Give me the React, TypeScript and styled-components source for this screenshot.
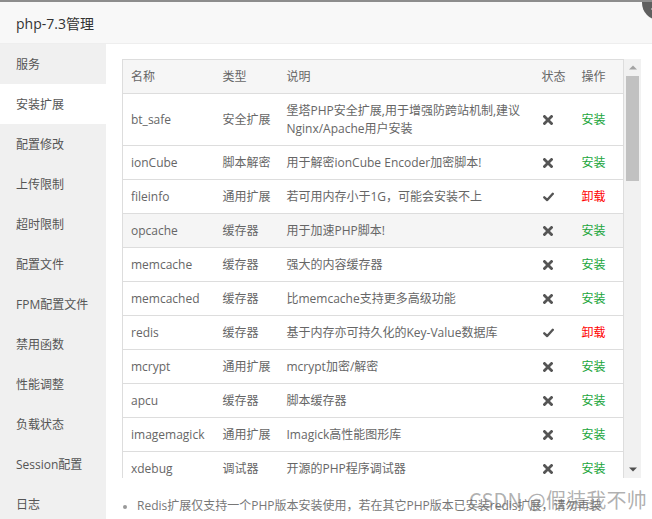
import React from "react";
import styled, { createGlobalStyle } from "styled-components";

const FONT = `"Open Sans", "Noto Sans CJK SC", sans-serif`;

const Global = createGlobalStyle`
  html, body { margin: 0; padding: 0; background: #fff; }
  body { font-family: ${FONT}; font-size: 12px; color: #666; }
  * { box-sizing: border-box; }
`;

const Layer = styled.div`
  position: relative;
  width: 652px;
  height: 519px;
  border-top: 2px solid #8d8d8d;
  overflow: hidden;
  background: #fff;
  display: flex;
  flex-direction: column;
`;

const TitleBar = styled.div`
  height: 42px;
  flex: none;
  background: #f8f8f8;
  border-bottom: 1px solid #eee;
  padding-left: 16px;
  display: flex;
  align-items: center;
  font-size: 14px;
  color: #333;
`;

const CloseBtn = styled.span`
  position: absolute;
  left: 642px;
  top: -16px;
  width: 34px;
  height: 34px;
  border-radius: 50%;
  background: #5f5f5f;
  display: flex;
  align-items: center;
  justify-content: center;
`;

const Body = styled.div`
  flex: 1;
  display: flex;
  min-height: 0;
`;

const Sidebar = styled.div`
  width: 106px;
  flex: none;
  background: #f0f0f0;
  display: flex;
  flex-direction: column;
`;

const NavItem = styled.div<{ $active?: boolean }>`
  height: 40px;
  flex: none;
  display: flex;
  align-items: center;
  padding-left: 16px;
  font-size: 12px;
  color: #555;
  background: ${(p) => (p.$active ? "#fff" : "transparent")};
`;

const Main = styled.div`
  flex: 1;
  padding: 15px 11px 0 16px;
  display: flex;
  flex-direction: column;
  min-width: 0;
`;

const ScrollArea = styled.div`
  height: 419px;
  flex: none;
  display: flex;
`;

const Scroller = styled.div`
  flex: 1;
  min-width: 0;
  overflow: hidden;
`;

const ScrollBar = styled.div`
  width: 17px;
  flex: none;
  background: #f1f1f1;
  display: flex;
  flex-direction: column;
`;

const ScrollBtn = styled.div`
  height: 17px;
  flex: none;
  display: flex;
  align-items: center;
  justify-content: center;
`;

const ScrollTrack = styled.div`
  flex: 1;
  padding: 0 2px;
`;

const Thumb = styled.div`
  height: 105px;
  background: #c1c1c1;
`;

const Table = styled.table`
  width: 100%;
  border-collapse: collapse;
  table-layout: fixed;
  border: 1px solid #ddd;
  border-top: none;
`;

const Th = styled.th`
  text-align: left;
  font-weight: normal;
  color: #666;
  background: #f6f6f6;
  padding: 8px 8px 7px;
  line-height: 18px;
  border-top: 1px solid #ddd;
  border-bottom: 1px solid #ddd;
  font-size: 12px;
`;

const Tr = styled.tr<{ $hover?: boolean }>`
  background: ${(p) => (p.$hover ? "#f5f5f5" : "#fff")};
`;

const Td = styled.td`
  padding: 8px 8px 7px;
  line-height: 18px;
  border-bottom: 1px solid #ddd;
  color: #666;
  font-size: 12px;
  vertical-align: middle;
`;

const Action = styled.a<{ $remove?: boolean }>`
  color: ${(p) => (p.$remove ? "#ff0000" : "#20a53a")};
  text-decoration: none;
`;

const Icon = styled.svg`
  display: block;
  margin-left: 1px;
`;

const Notes = styled.ul`
  margin: 19px 0 0;
  padding-left: 15px;
  font-size: 12px;
  color: #777;
  line-height: 18px;
  li { list-style: disc; }
  li::marker { color: #999; font-size: 10px; }
`;

const Watermark = styled.div`
  position: absolute;
  left: 469px;
  top: 483px;
  font-size: 20px;
  color: rgba(110, 110, 110, 0.55);
  font-family: "Noto Sans CJK SC", sans-serif;
  white-space: nowrap;
  letter-spacing: 0.2px;
`;

type Row = { name: string; type: string; desc: React.ReactNode; on?: boolean };

const rows: Row[] = [
  {
    name: "bt_safe",
    type: "安全扩展",
    desc: (
      <>
        堡塔PHP安全扩展,用于增强防跨站机制,建议
        <br />
        Nginx/Apache用户安装
      </>
    ),
  },
  { name: "ionCube", type: "脚本解密", desc: "用于解密ionCube Encoder加密脚本!" },
  { name: "fileinfo", type: "通用扩展", desc: "若可用内存小于1G，可能会安装不上", on: true },
  { name: "opcache", type: "缓存器", desc: "用于加速PHP脚本!" },
  { name: "memcache", type: "缓存器", desc: "强大的内容缓存器" },
  { name: "memcached", type: "缓存器", desc: "比memcache支持更多高级功能" },
  { name: "redis", type: "缓存器", desc: "基于内存亦可持久化的Key-Value数据库", on: true },
  { name: "mcrypt", type: "通用扩展", desc: "mcrypt加密/解密" },
  { name: "apcu", type: "缓存器", desc: "脚本缓存器" },
  { name: "imagemagick", type: "通用扩展", desc: "Imagick高性能图形库" },
  { name: "xdebug", type: "调试器", desc: "开源的PHP程序调试器" },
  { name: "imap", type: "邮件服务", desc: "邮件服务器必备" },
  { name: "exif", type: "通用扩展", desc: "用于读取图片EXIF信息" },
  { name: "intl", type: "通用扩展", desc: "提供国际化支持" },
  { name: "xsl", type: "通用扩展", desc: "xsl解析扩展" },
];

const nav = [
  "服务",
  "安装扩展",
  "配置修改",
  "上传限制",
  "超时限制",
  "配置文件",
  "FPM配置文件",
  "禁用函数",
  "性能调整",
  "负载状态",
  "Session配置",
  "日志",
];

const XIcon = () => (
  <Icon width="10" height="10" viewBox="0 0 10 10">
    <path d="M1.5 1.5 L8.5 8.5 M8.5 1.5 L1.5 8.5" stroke="#555" strokeWidth="2.8" strokeLinecap="square" />
  </Icon>
);

const CheckIcon = () => (
  <Icon width="11" height="10" viewBox="0 0 11 10">
    <path d="M1.3 5.3 L4.2 8 L9.8 1.8" stroke="#555" strokeWidth="2.4" fill="none" strokeLinecap="round" strokeLinejoin="round" />
  </Icon>
);

export default function App() {
  return (
    <>
      <Global />
      <Layer>
        <TitleBar>php-7.3管理</TitleBar>
        <CloseBtn>
          <svg width="34" height="34" viewBox="0 0 34 34">
            <path d="M11 11 L23 23 M23 11 L11 23" stroke="#fff" strokeWidth="3" strokeLinecap="round" />
          </svg>
        </CloseBtn>
        <Body>
          <Sidebar>
            {nav.map((n) => (
              <NavItem key={n} $active={n === "安装扩展"}>
                {n}
              </NavItem>
            ))}
          </Sidebar>
          <Main>
            <ScrollArea>
              <Scroller>
                <Table>
                  <colgroup>
                    <col style={{ width: 92 }} />
                    <col style={{ width: 64 }} />
                    <col />
                    <col style={{ width: 40 }} />
                    <col style={{ width: 50 }} />
                  </colgroup>
                  <thead>
                    <tr>
                      <Th>名称</Th>
                      <Th>类型</Th>
                      <Th>说明</Th>
                      <Th>状态</Th>
                      <Th>操作</Th>
                    </tr>
                  </thead>
                  <tbody>
                    {rows.map((r) => (
                      <Tr key={r.name} $hover={r.name === "opcache"}>
                        <Td>{r.name}</Td>
                        <Td>{r.type}</Td>
                        <Td>{r.desc}</Td>
                        <Td>{r.on ? <CheckIcon /> : <XIcon />}</Td>
                        <Td>
                          <Action $remove={r.on}>{r.on ? "卸载" : "安装"}</Action>
                        </Td>
                      </Tr>
                    ))}
                  </tbody>
                </Table>
              </Scroller>
              <ScrollBar>
                <ScrollBtn>
                  <svg width="8" height="5" viewBox="0 0 8 5">
                    <path d="M0 4.5 L8 4.5 L4 0.5 Z" fill="#a3a3a3" />
                  </svg>
                </ScrollBtn>
                <ScrollTrack>
                  <Thumb />
                </ScrollTrack>
                <ScrollBtn>
                  <svg width="8" height="5" viewBox="0 0 8 5">
                    <path d="M0 0.5 L8 0.5 L4 4.5 Z" fill="#505050" />
                  </svg>
                </ScrollBtn>
              </ScrollBar>
            </ScrollArea>
            <Notes>
              <li>Redis扩展仅支持一个PHP版本安装使用，若在其它PHP版本已安装redis扩展，请勿再装</li>
            </Notes>
          </Main>
        </Body>
        <Watermark>CSDN @假装我不帅</Watermark>
      </Layer>
    </>
  );
}
